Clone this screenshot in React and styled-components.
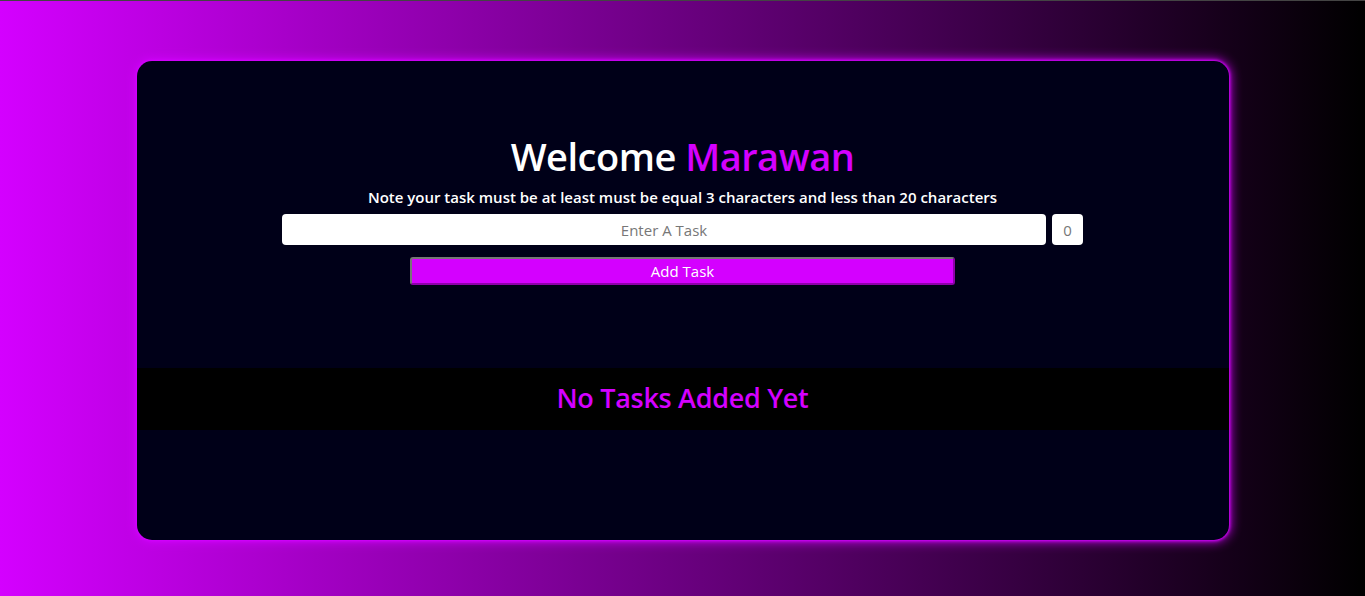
import styled, { createGlobalStyle } from "styled-components";

const GlobalStyle = createGlobalStyle`
  * {
    box-sizing: border-box;
  }
  body {
    margin: 0;
    font-family: "Open Sans", "Noto Sans", sans-serif;
  }
`;

const Page = styled.div`
  height: 100vh;
  display: flex;
  justify-content: center;
  align-items: flex-start;
  padding-top: 60px;
  background: linear-gradient(to right, #d400ff, #000);
  border-top: 1px solid #444;
`;

const Card = styled.div`
  width: 80vw;
  height: calc(80vh + 2px);
  background-color: #000018;
  border-radius: 15px;
  box-shadow: 0 0 12px 1px #d400ff, 0 0 3px 1px #d400ff;
  display: flex;
  flex-direction: column;
  align-items: center;
  padding-top: 71px;
  overflow: hidden;
`;

const Title = styled.h1`
  margin: 0;
  font-size: 38px;
  font-weight: 600;
  line-height: 48px;
  color: #fff;
  letter-spacing: -0.5px;
`;

const Name = styled.span`
  color: #d400ff;
`;

const Note = styled.p`
  margin: 7px 0 0;
  font-size: 15px;
  font-weight: 600;
  line-height: 20px;
  color: #fff;
`;

const InputRow = styled.div`
  margin-top: 7px;
  width: 801px;
  display: flex;
  gap: 6px;
`;

const TaskInput = styled.input`
  flex: 1;
  height: 31px;
  border: none;
  border-radius: 4px;
  background: #fff;
  text-align: center;
  font-family: inherit;
  font-size: 15px;
  color: #333;
  outline: none;

  &::placeholder {
    color: #777;
  }
`;

const Counter = styled.div`
  width: 31px;
  height: 31px;
  border-radius: 4px;
  background: #fff;
  display: flex;
  justify-content: center;
  align-items: center;
  font-size: 15px;
  color: #777;
`;

const AddButton = styled.button`
  margin-top: 12px;
  width: 545px;
  height: 28px;
  background-color: #d400ff;
  color: #fff;
  border: 2px outset #767676;
  border-right-color: #d400ff;
  border-bottom-color: #d400ff;
  border-radius: 3px;
  font-family: inherit;
  font-size: 15px;
  cursor: pointer;
`;

const EmptyBand = styled.div`
  margin-top: 83px;
  width: 100%;
  height: 62px;
  background-color: #000;
  display: flex;
  justify-content: center;
  align-items: center;
`;

const EmptyText = styled.h2`
  margin: 0 0 4px;
  font-size: 27px;
  font-weight: 600;
  color: #d400ff;
  letter-spacing: -0.3px;
`;

export default function App() {
  return (
    <>
      <GlobalStyle />
      <Page>
        <Card>
          <Title>
            Welcome <Name>Marawan</Name>
          </Title>
          <Note>
            Note your task must be at least must be equal 3 characters and less
            than 20 characters
          </Note>
          <InputRow>
            <TaskInput placeholder="Enter A Task" />
            <Counter>0</Counter>
          </InputRow>
          <AddButton>Add Task</AddButton>
          <EmptyBand>
            <EmptyText>No Tasks Added Yet</EmptyText>
          </EmptyBand>
        </Card>
      </Page>
    </>
  );
}
